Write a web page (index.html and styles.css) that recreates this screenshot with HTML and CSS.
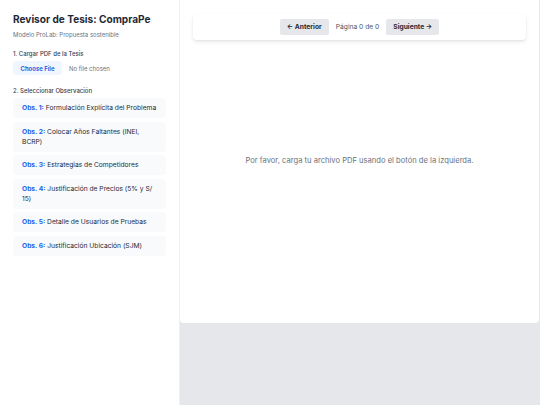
FILE: index.html
```html
<!DOCTYPE html>
<html lang="es">
<head>
<meta charset="utf-8">
<title>Revisor de Tesis: CompraPe</title>
<link rel="stylesheet" href="styles.css">
</head>
<body>
<div class="app">
  <aside class="sidebar">
    <h1 class="title">Revisor de Tesis: CompraPe</h1>
    <p class="subtitle">Modelo ProLab: Propuesta sostenible</p>
    <label class="label" for="pdf">1. Cargar PDF de la Tesis</label>
    <input class="file" id="pdf" type="file" accept="application/pdf">
    <p class="label label-obs">2. Seleccionar Observación</p>
    <ul class="obs-list">
      <li class="obs"><span class="obs-num">Obs. 1:</span> Formulación Explícita del Problema</li>
      <li class="obs"><span class="obs-num">Obs. 2:</span> Colocar Años Faltantes (INEI, BCRP)</li>
      <li class="obs"><span class="obs-num">Obs. 3:</span> Estrategias de Competidores</li>
      <li class="obs"><span class="obs-num">Obs. 4:</span> Justificación de Precios (5% y S/ 15)</li>
      <li class="obs"><span class="obs-num">Obs. 5:</span> Detalle de Usuarios de Pruebas</li>
      <li class="obs"><span class="obs-num">Obs. 6:</span> Justificación Ubicación (SJM)</li>
    </ul>
  </aside>
  <main class="main">
    <section class="viewer">
      <div class="toolbar">
        <button class="nav-btn" type="button">← Anterior</button>
        <span class="page-info">Página 0 de 0</span>
        <button class="nav-btn" type="button">Siguiente →</button>
      </div>
      <div class="placeholder">
        <p>Por favor, carga tu archivo PDF usando el botón de la izquierda.</p>
      </div>
    </section>
  </main>
</div>
</body>
</html>
```
FILE: styles.css
```css
* { box-sizing: border-box; }
html, body { margin: 0; padding: 0; height: 100%; }
body {
  font-family: Inter, "Noto Sans", "Liberation Sans", sans-serif;
  color: #1f2937;
  background: #e5e7eb;
}
.app {
  display: flex;
  height: 405px;
}
.sidebar {
  width: 180px;
  flex-shrink: 0;
  background: #ffffff;
  padding: 12px 13px;
  border-right: 1px solid #eef0f3;
}
.title {
  margin: 0;
  font-size: 10.1px;
  line-height: 15px;
  font-weight: 700;
  color: #1f2937;
  white-space: nowrap;
}
.subtitle {
  margin: 2.5px 0 0;
  font-size: 6px;
  line-height: 9px;
  color: #6b7280;
}
.label {
  display: block;
  margin: 10px 0 3.5px;
  font-size: 6px;
  line-height: 9px;
  font-weight: 500;
  color: #374151;
}
.file {
  display: block;
  font-family: inherit;
  font-size: 6px;
  color: #6b7280;
  height: 14px;
}
.file::file-selector-button {
  font-family: inherit;
  font-size: 6px;
  font-weight: 600;
  color: #1d4ed8;
  background: #eff6ff;
  border: 0;
  border-radius: 4px;
  height: 14px;
  padding: 0 7.5px;
  margin-right: 7px;
}
.label-obs { margin-top: 10.5px; margin-bottom: 3.5px; }
.obs-list {
  list-style: none;
  margin: 0;
  padding: 0;
  display: flex;
  flex-direction: column;
  gap: 3.5px;
}
.obs {
  background: #f8fafc;
  border-radius: 4px;
  padding: 5px 9px;
  font-size: 6.7px;
  line-height: 10px;
  color: #1f2937;
}
.obs-num { font-weight: 700; color: #2563eb; }
.main {
  flex: 1;
  background: #e5e7eb;
  padding: 0 1px 0 0;
}
.viewer {
  height: 323px;
  background: #ffffff;
  border-radius: 0 0 4px 4px;
  padding: 14px 13px;
  display: flex;
  flex-direction: column;
}
.toolbar {
  display: flex;
  justify-content: center;
  align-items: center;
  gap: 7px;
  padding: 5px;
  background: #ffffff;
  border-radius: 4px;
  box-shadow: 0 2px 4px rgba(0,0,0,0.08), 0 1px 2px rgba(0,0,0,0.05);
}
.nav-btn {
  font-family: inherit;
  font-size: 6.7px;
  font-weight: 700;
  color: #1f2937;
  background: #e5e7eb;
  border: 0;
  border-radius: 2px;
  height: 16px;
  padding: 0 7px;
}
.page-info {
  font-size: 6.7px;
  color: #4b5563;
}
.placeholder {
  flex: 1;
  display: flex;
  align-items: center;
  justify-content: center;
  padding-bottom: 28px;
}
.placeholder p {
  margin: 0;
  font-size: 7.6px;
  color: #6b7280;
}
```
